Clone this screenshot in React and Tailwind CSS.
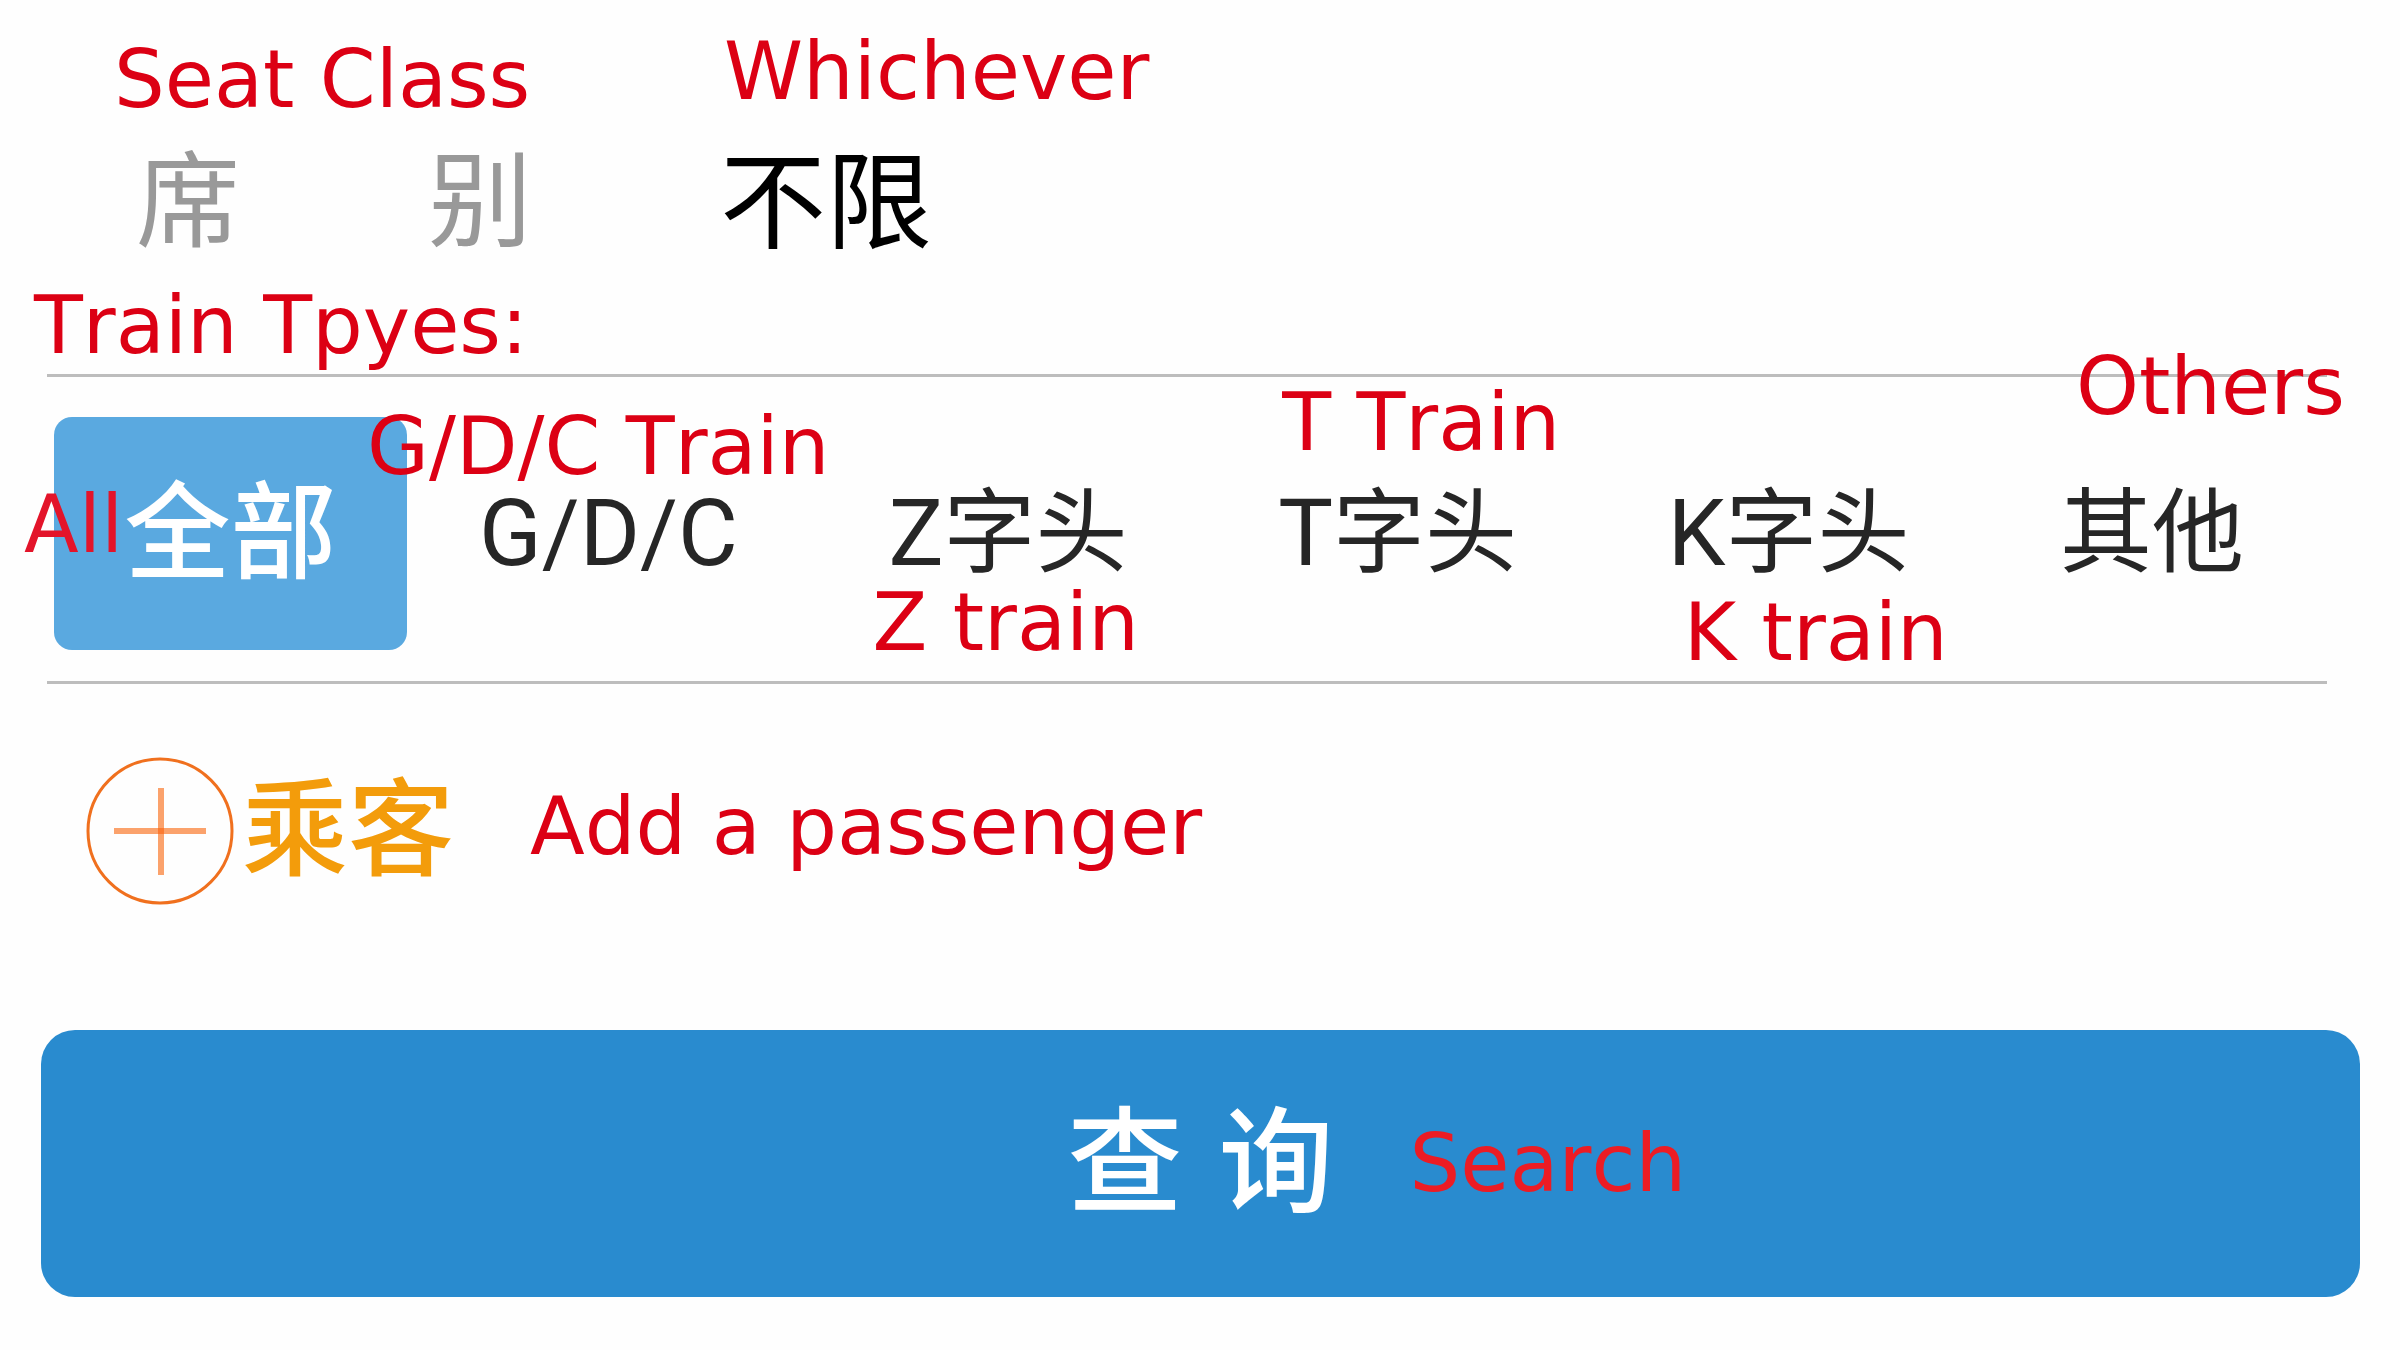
import { useState } from "react";

const trainTypes = [
  { id: "gdc", label: "G/D/C", note: "G/D/C Train", notePos: "-left-28 -top-[18px]" },
  { id: "z", label: "Z字头", note: "Z train", notePos: "-left-4 top-[158px]" },
  { id: "t", label: "T字头", note: "T Train", notePos: "left-1 -top-[42px]" },
  { id: "k", label: "K字头", note: "K train", notePos: "left-4 top-[168px]" },
  { id: "other", label: "其他", note: "Others", notePos: "left-4 -top-[78px]" },
];

// Red English note next to a Chinese label
function Note({ className = "", children }) {
  return (
    <span
      className={`font-['DejaVu_Sans',sans-serif] font-normal [font-kerning:none] text-[80px] leading-[96px] whitespace-nowrap ${className}`}
    >
      {children}
    </span>
  );
}

function PlusCircle() {
  return (
    <svg className="w-[148px] h-[148px] shrink-0" viewBox="0 0 148 148" fill="none">
      <circle cx="74" cy="74" r="72" stroke="#f0701e" strokeWidth="3" />
      <path d="M28 74H120M75 31V118" stroke="#fba26c" strokeWidth="6" />
      <rect x="72" y="71" width="6" height="6" fill="#fc7a30" />
    </svg>
  );
}

function App() {
  const [selected, setSelected] = useState("all");

  const tabColor = (id) =>
    selected === id ? "bg-[#5aa9e0] text-white" : "text-[#262626]";

  return (
    <main className="bg-[#fefefe] min-h-screen pb-[53px] font-['Roboto','Noto_Sans_CJK_SC',sans-serif]">
      {/* Seat class */}
      <section className="flex items-end pl-[114px] pt-6">
        <div className="w-[418px] flex flex-col gap-6">
          <Note className="text-[#dc0014]">Seat Class</Note>
          <span
            id="seat-label"
            className="flex justify-between pl-[22px] text-[104px] leading-[104px] text-[#999999]"
          >
            <span>席</span>
            <span>别</span>
          </span>
        </div>
        <div className="ml-[188px] flex flex-col items-start gap-8">
          <Note className="text-[#dc0014] ml-1">Whichever</Note>
          <button
            type="button"
            aria-labelledby="seat-label seat-value"
            className="text-[106px] leading-[104px] text-black"
          >
            <span id="seat-value">不限</span>
          </button>
        </div>
      </section>

      {/* Train types */}
      <section>
        <h2 className="pl-[34px] mt-[22px]">
          <Note className="block text-[#dc0014]">Train Tpyes:</Note>
        </h2>
        <div className="ml-[47px] mr-[73px] border-y-3 border-[#bdbdbd] pt-10 pb-[31px] pl-[7px] pr-[83px] flex">
          <button
            type="button"
            aria-pressed={selected === "all"}
            onClick={() => setSelected("all")}
            className={`relative w-[353px] h-[233px] shrink-0 rounded-[18px] text-[106px] leading-[104px] font-medium ${tabColor("all")}`}
          >
            全部
            <Note className="absolute -left-[30px] top-[60px] text-[#e3142a]">All</Note>
          </button>
          <div className="flex flex-1 justify-between ml-[72px]">
            {trainTypes.map((type) => (
              <button
                key={type.id}
                type="button"
                aria-pressed={selected === type.id}
                onClick={() => setSelected(type.id)}
                className={`relative h-[233px] rounded-[18px] text-[92px] leading-[92px] whitespace-nowrap ${tabColor(type.id)}`}
              >
                {type.label}
                <Note className={`absolute text-[#dc0014] ${type.notePos}`}>{type.note}</Note>
              </button>
            ))}
          </div>
        </div>
      </section>

      {/* Passengers */}
      <section className="mt-[73px] pl-[86px] flex items-center">
        <button
          type="button"
          className="flex items-center gap-2 text-[106px] leading-[104px] font-medium text-[#f39c0b]"
        >
          <PlusCircle />
          乘客
        </button>
        <Note className="ml-[76px] mb-2 text-[#dc0014]">Add a passenger</Note>
      </section>

      {/* Search */}
      <div className="mt-[125px] pl-[41px] pr-10">
        <button
          type="button"
          className="w-full h-[267px] rounded-[34px] bg-[#298bcf] flex items-center justify-center text-[115px] leading-[115px] font-medium text-white"
        >
          <span className="relative flex gap-9">
            <span>查</span>
            <span>询</span>
            <Note className="absolute left-full top-[10px] ml-[76px] text-[#ec1c24]">Search</Note>
          </span>
        </button>
      </div>
    </main>
  );
}

export default App;
